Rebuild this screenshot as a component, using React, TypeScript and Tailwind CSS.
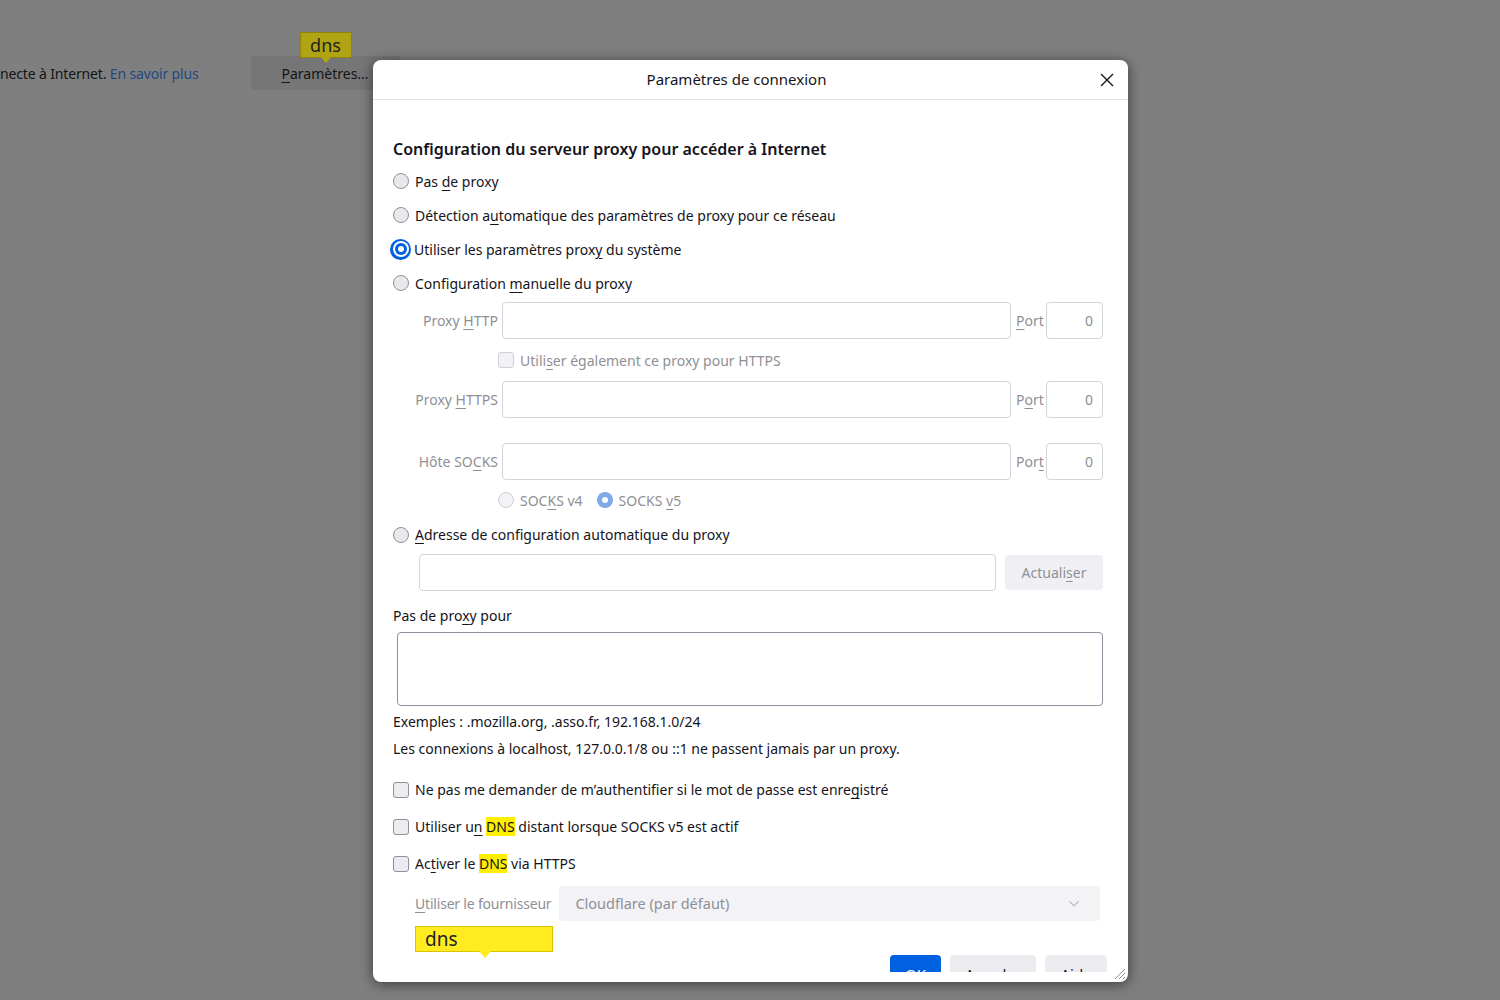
import React from "react";

const F = { fontFamily: '"Noto Sans", "Open Sans", sans-serif' };

function U({ children }: { children: React.ReactNode }) {
  return <span className="underline underline-offset-[3px] decoration-[1px]">{children}</span>;
}

function Radio({ kind }: { kind: "off" | "on" | "dis" | "dison" }) {
  if (kind === "on")
    return (
      <div className="w-[21px] h-[21px] -ml-[3px] mr-[1px] rounded-full bg-[#0060df] flex items-center justify-center shrink-0">
        <div className="w-[16px] h-[16px] rounded-full bg-white flex items-center justify-center">
          <div className="w-[12px] h-[12px] rounded-full bg-[#0060df] flex items-center justify-center">
            <div className="w-[6px] h-[6px] rounded-full bg-white" />
          </div>
        </div>
      </div>
    );
  if (kind === "dison")
    return (
      <div className="w-4 h-4 rounded-full bg-[#7eaae8] flex items-center justify-center shrink-0">
        <div className="w-[6px] h-[6px] rounded-full bg-white" />
      </div>
    );
  if (kind === "dis")
    return <div className="w-4 h-4 rounded-full border border-[#cfcfd6] bg-[#f3f3f5] shrink-0" />;
  return <div className="w-4 h-4 rounded-full border border-[#8f8f9d] bg-[#e9e9ed] shrink-0" />;
}

function Check({ dis }: { dis?: boolean }) {
  return dis ? (
    <div className="w-4 h-4 rounded-[3px] border border-[#cfcfd6] bg-[#f3f3f5] shrink-0" />
  ) : (
    <div className="w-4 h-4 rounded-[3px] border border-[#8f8f9d] bg-[#ececf0] shrink-0" />
  );
}

function Hl({ children }: { children: React.ReactNode }) {
  return <span className="bg-[#ffee00]">{children}</span>;
}

function PRow({ label, port }: { label: React.ReactNode; port: React.ReactNode }) {
  return (
    <div className="flex items-center h-[37px] text-[#8f8f96]">
      <div className="w-[90px] text-right pr-[4px] whitespace-nowrap">{label}</div>
      <div className="flex-1 h-[37px] border border-[#d3d3da] rounded-[4px]" />
      <div className="w-[35px] pl-[5px] whitespace-nowrap">{port}</div>
      <div className="w-[57px] h-[37px] border border-[#d3d3da] rounded-[4px] flex items-center justify-end pr-[9px]">0</div>
    </div>
  );
}

export default function App() {
  return (
    <div className="w-[1500px] h-[1000px] bg-[#7f7f7f] relative overflow-hidden text-[#15141a]" style={F}>
      {/* background page */}
      <div className="flex items-center pt-[56px] text-[14px]">
        <div className="h-[34px] flex items-center whitespace-nowrap text-[#141414] tracking-[-0.15px]">
          necte à Internet.&nbsp;<span className="text-[#24487f]">En savoir plus</span>
        </div>
        <div className="ml-[52px] relative h-[34px] w-[150px] bg-[#767677] rounded-[4px] flex items-center pl-[31px] text-[#141414] whitespace-nowrap">
          <span>
            <U>P</U>aramètres…
          </span>
          <div className="absolute left-[49px] -top-[24px] w-[52px] h-[26px] bg-[#b0a412] border border-[#8f8507] flex items-center justify-center text-[18px] text-[#222] leading-none">
            dns
            <div className="absolute left-[20px] -bottom-[6px] w-0 h-0 border-l-[5px] border-r-[5px] border-t-[6px] border-l-transparent border-r-transparent border-t-[#b0a412]" />
          </div>
        </div>
      </div>

      {/* dialog */}
      <div className="absolute left-[373px] top-[60px] w-[755px] h-[922px] bg-white rounded-[8px] shadow-[0_2px_14px_rgba(0,0,0,0.55)] flex flex-col overflow-hidden text-[14px]">
        <div className="h-[40px] shrink-0 flex items-center border-b border-[#e0e0e6]">
          <div className="flex-1 text-center text-[15px]">Paramètres de connexion</div>
          <svg width="14" height="14" viewBox="0 0 14 14" className="shrink-0">
            <path d="M1 1 L13 13 M13 1 L1 13" stroke="#15141a" strokeWidth="1.4" />
          </svg>
          <div className="w-[14px]" />
        </div>

        <div className="flex-1 overflow-hidden pl-[20px] pr-[25px] pt-[38px] relative">
          <div className="text-[16px] font-semibold leading-[22px] whitespace-nowrap">
            Configuration du serveur proxy pour accéder à Internet
          </div>
          <div className="mt-[4px] flex flex-col">
            <div className="h-[34px] flex items-center gap-[6px]">
              <Radio kind="off" />
              <span>
                Pas <U>d</U>e proxy
              </span>
            </div>
            <div className="h-[34px] flex items-center gap-[6px]">
              <Radio kind="off" />
              <span>
                Détection a<U>u</U>tomatique des paramètres de proxy pour ce réseau
              </span>
            </div>
            <div className="h-[34px] flex items-center gap-[2px]">
              <Radio kind="on" />
              <span>
                Utiliser les paramètres prox<U>y</U> du système
              </span>
            </div>
            <div className="h-[34px] flex items-center gap-[6px]">
              <Radio kind="off" />
              <span>
                Configuration <U>m</U>anuelle du proxy
              </span>
            </div>
          </div>

          <div className="mt-[2px] pl-[19px] flex flex-col">
            <PRow
              label={
                <>
                  Proxy <U>H</U>TTP
                </>
              }
              port={
                <>
                  <U>P</U>ort
                </>
              }
            />
            <div className="h-[42px] flex items-center gap-[6px] pl-[86px] text-[#8f8f96]">
              <Check dis />
              <span>
                Utili<U>s</U>er également ce proxy pour HTTPS
              </span>
            </div>
            <PRow
              label={
                <>
                  Proxy <U>H</U>TTPS
                </>
              }
              port={
                <>
                  P<U>o</U>rt
                </>
              }
            />
            <div className="h-[25px]" />
            <PRow
              label={
                <>
                  Hôte SO<U>C</U>KS
                </>
              }
              port={
                <>
                  Por<U>t</U>
                </>
              }
            />
            <div className="h-[40px] flex items-center pl-[86px] text-[#8f8f96]">
              <Radio kind="dis" />
              <span className="ml-[6px]">
                SOC<U>K</U>S v4
              </span>
              <div className="ml-[14px]">
                <Radio kind="dison" />
              </div>
              <span className="ml-[6px]">
                SOCKS <U>v</U>5
              </span>
            </div>
          </div>

          <div className="h-[29px] flex items-center gap-[6px]">
            <Radio kind="off" />
            <span>
              <U>A</U>dresse de configuration automatique du proxy
            </span>
          </div>
          <div className="mt-[5px] pl-[26px] flex items-center gap-[9px]">
            <div className="flex-1 h-[37px] border border-[#d3d3da] rounded-[4px]" />
            <div className="w-[98px] h-[35px] bg-[#f0f0f4] rounded-[4px] flex items-center justify-center text-[#8f8f96]">
              Actuali<U>s</U>er
            </div>
          </div>

          <div className="mt-[15px] leading-[20px]">
            Pas de pro<U>x</U>y pour
          </div>
          <div className="mt-[6px] ml-[4px] h-[74px] border border-[#8f8f9d] rounded-[4px]" />
          <div className="mt-[6px] leading-[20px]">Exemples : .mozilla.org, .asso.fr, 192.168.1.0/24</div>
          <div className="mt-[7px] leading-[20px]">
            Les connexions à localhost, 127.0.0.1/8 ou ::1 ne passent jamais par un proxy.
          </div>

          <div className="mt-[12px] flex flex-col">
            <div className="h-[37px] flex items-center gap-[6px]">
              <Check />
              <span>
                Ne pas me demander de m’authentifier si le mot de passe est enre<U>g</U>istré
              </span>
            </div>
            <div className="h-[37px] flex items-center gap-[6px]">
              <Check />
              <span>
                Utiliser u<U>n</U> <Hl>DNS</Hl> distant lorsque SOCKS v5 est actif
              </span>
            </div>
            <div className="h-[37px] flex items-center gap-[6px]">
              <Check />
              <span>
                Ac<U>t</U>iver le <Hl>DNS</Hl> via HTTPS
              </span>
            </div>
          </div>

          <div className="mt-[4px] pl-[22px] flex items-center gap-[8px] pr-[3px]">
            <span className="text-[#8f8f96] whitespace-nowrap tracking-[-0.2px]">
              <U>U</U>tiliser le fournisseur
            </span>
            <div className="flex-1 h-[35px] bg-[#f3f3f6] rounded-[4px] flex items-center justify-between pl-[16px] pr-[20px] text-[#8f8f96] text-[14.5px]">
              <span>Cloudflare (par défaut)</span>
              <svg width="12" height="8" viewBox="0 0 12 8">
                <path d="M1.5 1.5 L6 6 L10.5 1.5" stroke="#b8b8c0" strokeWidth="1.2" fill="none" />
              </svg>
            </div>
          </div>

          <div className="mt-[34px] -mr-[4px] flex justify-end gap-[9px] text-[15px]">
            <div className="w-[51px] h-[38px] rounded-[4px] bg-[#0061e0] text-white flex items-center justify-center">OK</div>
            <div className="w-[86px] h-[38px] rounded-[4px] bg-[#ececf0] flex items-center justify-center">Annuler</div>
            <div className="w-[62px] h-[38px] rounded-[4px] bg-[#ececf0] flex items-center justify-center">Aide</div>
          </div>

          {/* find tooltip */}
          <div className="absolute left-[42px] top-[826px] w-[138px] h-[26px] bg-[#ffeb1f] border border-[#d8c400] flex items-center pl-[9px] text-[19px] leading-none text-[#222]">
            dns
            <div className="absolute left-[63px] -bottom-[7px] w-0 h-0 border-l-[6px] border-r-[6px] border-t-[7px] border-l-transparent border-r-transparent border-t-[#ffeb1f]" />
          </div>
        </div>
        <div className="h-[10px] shrink-0" />

        <svg width="14" height="14" viewBox="0 0 14 14" className="absolute right-[2px] bottom-[2px]">
          <path d="M13 3 L3 13 M13 7 L7 13 M13 11 L11 13" stroke="#8a8a8a" strokeWidth="1" />
        </svg>
      </div>
    </div>
  );
}
